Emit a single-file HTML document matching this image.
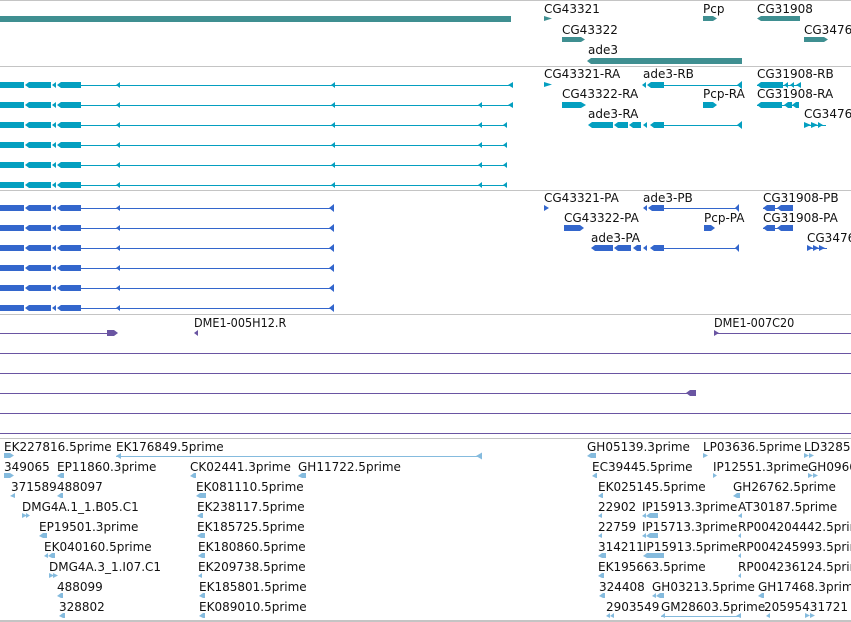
<!DOCTYPE html>
<html><head><meta charset="utf-8"><style>
html,body{margin:0;padding:0;background:#fff;width:851px;height:622px;overflow:hidden}
svg text{font-family:"DejaVu Sans","Liberation Sans",sans-serif;font-size:12px;fill:#111}
.n{font-family:"DejaVu Sans Condensed","Liberation Sans Narrow","Liberation Sans",sans-serif;font-size:12.5px}
rect{shape-rendering:crispEdges}
</style></head><body>
<svg width="851" height="622" viewBox="0 0 851 622" xmlns="http://www.w3.org/2000/svg">
<g fill="#c4c4c4">
<rect x="0" y="0" width="851" height="1"/>
<rect x="0" y="66" width="851" height="1"/>
<rect x="0" y="190" width="851" height="1"/>
<rect x="0" y="314" width="851" height="1"/>
<rect x="0" y="438" width="851" height="1"/>
<rect x="0" y="620" width="851" height="2"/>
</g>

<g fill="#3f8f91">
<rect x="0" y="16" width="511" height="6"/>
<polygon points="544,16 552,18.5 544,21"/>
<polygon points="703,16 713,16 717,18.5 713,21 703,21"/>
<polygon points="757,18.5 761,16 800,16 800,21 761,21"/>
<polygon points="562,37 581,37 585,39.5 581,42 562,42"/>
<polygon points="804,37 824,37 828,39.5 824,42 804,42"/>
<polygon points="587,61 591,58 742,58 742,64 591,64"/>
</g>
<text x="544" y="13">CG43321</text>
<text x="703" y="13">Pcp</text>
<text x="757" y="13">CG31908</text>
<text x="562" y="34">CG43322</text>
<text x="804" y="34">CG3476</text>
<text x="588" y="54">ade3</text>

<g fill="#049fc0">
<g id="lt">
<rect x="0" y="82" width="24" height="6"/>
<polygon points="25,85 29,82 51,82 51,88 29,88"/>
<polygon points="52,85 56,82 56,88"/>
<polygon points="57,85 61,82 81,82 81,88 61,88"/>
<polygon points="116,85 120,82 120,88"/>
<polygon points="331,85 335,82 335,88"/>
</g>
<rect x="81" y="85" width="432" height="1"/>
<polygon points="508,85 513,82 513,88"/>
<use href="#lt" y="20"/><rect x="81" y="105" width="432" height="1"/>
<polygon points="478,105 482,102 482,108"/><polygon points="508,105 513,102 513,108"/>
<use href="#lt" y="40"/><rect x="81" y="125" width="426" height="1"/>
<polygon points="478,125 482,122 482,128"/><polygon points="503,125 507,122 507,128"/>
<use href="#lt" y="60"/><rect x="81" y="145" width="426" height="1"/>
<polygon points="478,145 482,142 482,148"/><polygon points="503,145 507,142 507,148"/>
<use href="#lt" y="80"/><rect x="81" y="165" width="426" height="1"/>
<polygon points="478,165 482,162 482,168"/><polygon points="503,165 507,162 507,168"/>
<use href="#lt" y="100"/><rect x="81" y="185" width="426" height="1"/>
<polygon points="478,185 482,182 482,188"/><polygon points="503,185 507,182 507,188"/>

<polygon points="544,82 552,84.5 544,87"/>
<polygon points="642,85 646,82 646,88"/><polygon points="647,85 651,82 664,82 664,88 651,88"/>
<rect x="664" y="85" width="78" height="1"/><polygon points="737,85 742,81 742,89"/>
<polygon points="757,85 761,82 783,82 783,88 761,88"/><rect x="757" y="85" width="44" height="1"/>
<polygon points="784,85 788,82 788,88"/><polygon points="790,85 794,82 794,88"/><polygon points="796,85 801,82 801,88"/>
<polygon points="562,102 581,102 586,105 581,108 562,108"/>
<polygon points="703,102 713,102 717,105 713,108 703,108"/>
<polygon points="757,105 761,102 782,102 782,108 761,108"/><rect x="757" y="105" width="42" height="1"/>
<polygon points="784,105 788,102 792,102 792,108 788,108"/><polygon points="792,105 796,102 799,102 799,108 796,108"/>
<polygon points="588,125 592,122 613,122 613,128 592,128"/>
<polygon points="614,125 618,122 628,122 628,128 618,128"/>
<polygon points="629,125 633,122 641,122 641,128 633,128"/>
<polygon points="643,125 647,122 647,128"/><polygon points="650,125 654,122 664,122 664,128 654,128"/>
<rect x="664" y="125" width="78" height="1"/><polygon points="737,125 742,121 742,129"/>
<polygon points="804,122 811,125 804,128"/><polygon points="811,122 818,125 811,128"/><polygon points="818,122 823,125 818,128"/>
<rect x="804" y="125" width="22" height="1"/>
</g>
<text x="544" y="78">CG43321-RA</text>
<text x="643" y="78">ade3-RB</text>
<text x="757" y="78">CG31908-RB</text>
<text x="562" y="98">CG43322-RA</text>
<text x="703" y="98">Pcp-RA</text>
<text x="757" y="98">CG31908-RA</text>
<text x="588" y="118">ade3-RA</text>
<text x="804" y="118">CG3476</text>

<g fill="#3366cc">
<g id="lb">
<rect x="0" y="205" width="24" height="6"/>
<polygon points="25,208 29,205 51,205 51,211 29,211"/>
<polygon points="52,208 56,205 56,211"/>
<polygon points="57,208 61,205 81,205 81,211 61,211"/>
<polygon points="116,208 120,205 120,211"/>
<rect x="81" y="208" width="253" height="1"/>
<polygon points="329,208 334,204 334,212"/>
</g>
<use href="#lb" y="20"/><use href="#lb" y="40"/><use href="#lb" y="60"/><use href="#lb" y="80"/><use href="#lb" y="100"/>
<polygon points="544,205 549,208 544,211"/>
<polygon points="643,208 647,205 647,211"/><polygon points="648,208 652,205 664,205 664,211 652,211"/>
<rect x="664" y="208" width="75" height="1"/><polygon points="735,208 739,204 739,212"/>
<polygon points="763,208 767,205 775,205 775,211 767,211"/><rect x="763" y="208" width="30" height="1"/>
<polygon points="777,208 781,205 793,205 793,211 781,211"/>
<polygon points="564,225 580,225 584,228 580,231 564,231"/>
<polygon points="704,225 711,225 715,228 711,231 704,231"/>
<polygon points="763,228 767,225 775,225 775,231 767,231"/><rect x="763" y="228" width="30" height="1"/>
<polygon points="777,228 781,225 793,225 793,231 781,231"/>
<polygon points="591,248 595,245 613,245 613,251 595,251"/>
<polygon points="614,248 618,245 631,245 631,251 618,251"/>
<polygon points="633,248 637,245 641,245 641,251 637,251"/>
<polygon points="643,248 647,245 647,251"/><polygon points="650,248 654,245 664,245 664,251 654,251"/>
<rect x="664" y="248" width="75" height="1"/><polygon points="735,248 739,244 739,252"/>
<polygon points="807,245 813,248 807,251"/><polygon points="813,245 819,248 813,251"/><polygon points="819,245 825,248 819,251"/>
<rect x="807" y="248" width="20" height="1"/>
</g>
<text x="544" y="202">CG43321-PA</text>
<text x="643" y="202">ade3-PB</text>
<text x="763" y="202">CG31908-PB</text>
<text x="564" y="222">CG43322-PA</text>
<text x="704" y="222">Pcp-PA</text>
<text x="763" y="222">CG31908-PA</text>
<text x="591" y="242">ade3-PA</text>
<text x="807" y="242">CG3476</text>

<g fill="#6a55a2">
<rect x="0" y="333" width="110" height="1"/>
<polygon points="107,330 114,330 118,333 114,336 107,336"/>
<polygon points="194,333 198,330 198,336"/>
<polygon points="714,330 719,333 714,336"/>
<rect x="714" y="333" width="137" height="1"/>
<rect x="0" y="353" width="851" height="1"/>
<rect x="0" y="373" width="851" height="1"/>
<rect x="0" y="393" width="690" height="1"/>
<polygon points="686,393 690,390 696,390 696,396 690,396"/>
<rect x="0" y="413" width="851" height="1"/>
<rect x="0" y="433" width="851" height="1"/>
</g>
<text class="n" x="194" y="327">DME1-005H12.R</text>
<text class="n" x="714" y="327">DME1-007C20</text>

<g fill="#85bbde">
<polygon points="4,453 10,453 14,455.5 10,458 4,458"/>
<polygon points="116,456 121,453 121,459"/><rect x="116" y="456" width="364" height="1"/><polygon points="476,456 482,452.5 482,459.5"/>
<polygon points="4,473 10,473 14,475.5 10,478 4,478"/>
<polygon points="57,476 61,473 64,473 64,478 61,478"/>
<polygon points="190,476 194,473 196,473 196,478 194,478"/>
<polygon points="298,476 302,473 306,473 306,478 302,478"/>
<polygon points="10,496 15,493 15,498"/><polygon points="57,496 61,493 63,493 63,498 61,498"/>
<polygon points="196,496 200,493 206,493 206,498 200,498"/>
<polygon points="22,513 27,515.5 22,518"/><polygon points="26,513 30,515.5 26,518"/>
<polygon points="197,516 201,513 203,513 203,518 201,518"/>
<polygon points="39,536 43,533 47,533 47,538 43,538"/>
<polygon points="197,536 201,533 205,533 205,538 201,538"/>
<polygon points="44,556 48,553 48,558"/><polygon points="48,556 52,553 55,553 55,558 52,558"/>
<polygon points="198,556 202,553 205,553 205,558 202,558"/>
<polygon points="49,573 54,575.5 49,578"/><polygon points="53,573 58,575.5 53,578"/>
<polygon points="198,576 202,573 202,578"/>
<polygon points="57,596 61,593 63,593 63,598 61,598"/>
<polygon points="199,596 203,593 205,593 205,598 203,598"/>
<polygon points="59,616 63,613 65,613 65,618 63,618"/>
<polygon points="199,616 203,613 205,613 205,618 203,618"/>
<polygon points="587,456 591,453 596,453 596,458 591,458"/>
<polygon points="703,453 708,455.5 703,458"/>
<polygon points="804,453 809,455.5 804,458"/><polygon points="809,453 814,455.5 809,458"/>
<polygon points="592,476 596,473 597,473 597,478 596,478"/>
<polygon points="713,473 717,475.5 713,478"/>
<polygon points="808,473 813,475.5 808,478"/><polygon points="813,473 818,475.5 813,478"/>
<polygon points="598,496 602,493 603,493 603,498 602,498"/>
<polygon points="733,496 737,493 740,493 740,498 737,498"/>
<polygon points="598,516 602,513 602,518"/><polygon points="642,516 646,513 646,518"/><polygon points="646,516 650,513 658,513 658,518 650,518"/>
<polygon points="738,516 742,513 742,518"/>
<polygon points="598,536 602,533 602,538"/><polygon points="642,536 646,533 646,538"/><polygon points="646,536 650,533 658,533 658,538 650,538"/>
<polygon points="738,536 741,533 741,538"/>
<polygon points="598,556 602,553 606,553 606,558 602,558"/><polygon points="643,556 647,553 664,553 664,558 647,558"/>
<polygon points="738,556 741,553 741,558"/>
<polygon points="598,576 602,573 604,573 604,578 602,578"/>
<polygon points="738,576 741,573 741,578"/>
<polygon points="599,596 603,593 605,593 605,598 603,598"/><polygon points="652,596 656,593 656,598"/><polygon points="656,596 660,593 664,593 664,598 660,598"/>
<polygon points="758,596 762,593 764,593 764,598 762,598"/>
<polygon points="606,616 610,613 610,618"/><polygon points="610,616 614,613 614,618"/>
<polygon points="661,616 665,613 665,618"/><rect x="661" y="616" width="80" height="1"/><polygon points="736,616 741,613 741,618"/>
<polygon points="766,616 770,613 770,618"/>
<polygon points="805,613 810,615.5 805,618"/><polygon points="810,613 815,615.5 810,618"/>
</g>
<g>
<text x="4" y="451">EK227816.5prime</text><text x="116" y="451">EK176849.5prime</text>
<text x="4" y="471">349065</text><text x="57" y="471">EP11860.3prime</text><text x="190" y="471">CK02441.3prime</text><text x="298" y="471">GH11722.5prime</text>
<text x="11" y="491">371589</text><text x="57" y="491">488097</text><text x="196" y="491">EK081110.5prime</text>
<text x="22" y="511">DMG4A.1_1.B05.C1</text><text x="197" y="511">EK238117.5prime</text>
<text x="39" y="531">EP19501.3prime</text><text x="197" y="531">EK185725.5prime</text>
<text x="44" y="551">EK040160.5prime</text><text x="198" y="551">EK180860.5prime</text>
<text x="49" y="571">DMG4A.3_1.I07.C1</text><text x="198" y="571">EK209738.5prime</text>
<text x="57" y="591">488099</text><text x="199" y="591">EK185801.5prime</text>
<text x="59" y="611">328802</text><text x="199" y="611">EK089010.5prime</text>

<text x="587" y="451">GH05139.3prime</text><text x="703" y="451">LP03636.5prime</text><text x="804" y="451">LD32856</text>
<text x="592" y="471">EC39445.5prime</text><text x="713" y="471">IP12551.3prime</text><text x="808" y="471">GH0966</text>
<text x="598" y="491">EK025145.5prime</text><text x="733" y="491">GH26762.5prime</text>
<text x="598" y="511">22902</text><text x="642" y="511">IP15913.3prime</text><text x="738" y="511">AT30187.5prime</text>
<text x="598" y="531">22759</text><text x="642" y="531">IP15713.3prime</text><text x="738" y="531">RP004204442.5prime</text>
<text x="598" y="551">314211</text><text x="643" y="551">IP15913.5prime</text><text x="738" y="551">RP004245993.5prime</text>
<text x="598" y="571">EK195663.5prime</text><text x="738" y="571">RP004236124.5prime</text>
<text x="599" y="591">324408</text><text x="652" y="591">GH03213.5prime</text><text x="758" y="591">GH17468.3prime</text>
<text x="606" y="611">2903549</text><text x="661" y="611">GM28603.5prime</text><text x="764" y="611">20595431721</text>
</g>
</svg>
</body></html>
